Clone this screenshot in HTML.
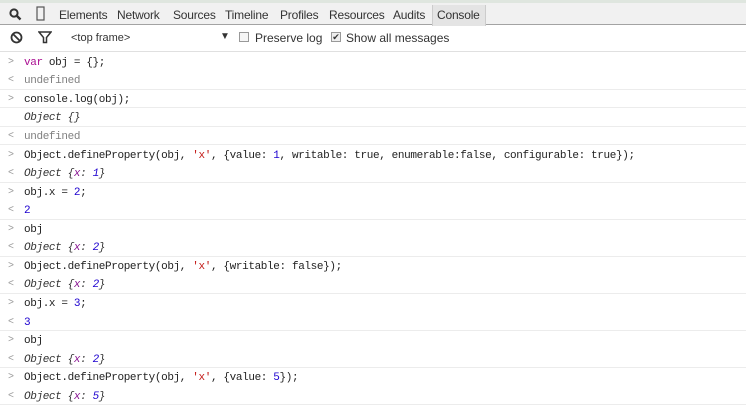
<!DOCTYPE html>
<html><head><meta charset="utf-8"><style>
body{margin:0;width:746px;height:407px;overflow:hidden;background:#fff;position:relative;font-family:"Liberation Sans",sans-serif}
.tb{position:absolute;left:0;top:0;width:746px;height:25px;background:#f1f1f1;border-top:3px solid #dfe6df;box-sizing:border-box;border-bottom:1px solid #a3a3a3}
.tab{position:absolute;top:5px;font-size:12px;color:#333;letter-spacing:-0.2px}
.sel{position:absolute;left:432px;top:2px;width:52px;height:21px;background:#e4e4e4;border-left:1px solid #ccc;border-right:1px solid #ccc}
.tb2{position:absolute;left:0;top:25px;width:746px;height:26px;border-bottom:1px solid #e0e0e0;font-size:12px;color:#333}
.r{position:absolute;left:0;width:746px;height:18.56px;font-family:"Liberation Mono",monospace;font-size:11px;letter-spacing:-0.37px;line-height:20px;color:#222;white-space:pre;box-sizing:border-box}
.r .t{position:absolute;left:24px;top:0}
.r .p{position:absolute;left:8px;top:0;color:#999;font-size:10px}
.b{border-bottom:1px solid #ececec}
.k{color:#aa0d91}.s{color:#c41a16}.n{color:#1c00cf}.u{color:#808080}.i{font-style:italic;color:#333}.pr{color:#881391}
</style></head><body>
<div class="tb">
<svg style="position:absolute;left:9px;top:5px" width="13" height="13" viewBox="0 0 13 13"><circle cx="5" cy="5" r="3.6" fill="none" stroke="#333" stroke-width="2"/><path d="M7.5 7.5L11.5 11.5" stroke="#333" stroke-width="2.4"/></svg>
<svg style="position:absolute;left:36px;top:3px" width="9" height="15" viewBox="0 0 9 15"><rect x="1" y="1" width="7" height="13" fill="none" stroke="#555" stroke-width="1.2"/></svg>
<span class="tab" style="left:59px">Elements</span>
<span class="tab" style="left:117px">Network</span>
<span class="tab" style="left:173px">Sources</span>
<span class="tab" style="left:225px">Timeline</span>
<span class="tab" style="left:280px">Profiles</span>
<span class="sel"></span>
<span class="tab" style="left:329px">Resources</span>
<span class="tab" style="left:393px">Audits</span>
<span class="tab" style="left:437px">Console</span>
</div>
<div class="tb2">
<svg style="position:absolute;left:10px;top:6px" width="13" height="13" viewBox="0 0 13 13"><circle cx="6.5" cy="6.5" r="5" fill="none" stroke="#333" stroke-width="1.8"/><path d="M3 3L10 10" stroke="#333" stroke-width="1.8"/></svg>
<svg style="position:absolute;left:38px;top:6px" width="14" height="13" viewBox="0 0 14 13"><path d="M1 1H13L8.5 6.5V11.5H5.5V6.5Z" fill="none" stroke="#333" stroke-width="1.5"/></svg>
<span style="position:absolute;left:71px;top:7px;font-size:11px">&lt;top frame&gt;</span>
<span style="position:absolute;left:220px;top:6px;font-size:10px">▼</span>
<span style="position:absolute;left:239px;top:7px;width:10px;height:10px;border:1px solid #999;background:#f6f6f6;box-sizing:border-box"></span>
<span style="position:absolute;left:255px;top:6px">Preserve log</span>
<span style="position:absolute;left:331px;top:7px;width:10px;height:10px;border:1px solid #999;background:#eee;box-sizing:border-box;font-size:9px;line-height:9px;text-align:center">✔</span>
<span style="position:absolute;left:346px;top:6px">Show all messages</span>
</div>
<div class="r" style="top:52.7px"><span class="p">&gt;</span><span class="t"><span class="k">var</span> obj = {};</span></div>
<div class="r b" style="top:71.3px"><span class="p">&lt;</span><span class="t u">undefined</span></div>
<div class="r b" style="top:89.8px"><span class="p">&gt;</span><span class="t">console.log(obj);</span></div>
<div class="r b" style="top:108.4px"><span class="t i">Object {}</span></div>
<div class="r b" style="top:126.9px"><span class="p">&lt;</span><span class="t u">undefined</span></div>
<div class="r" style="top:145.5px"><span class="p">&gt;</span><span class="t">Object.defineProperty(obj, <span class="s">'x'</span>, {value: <span class="n">1</span>, writable: true, enumerable:false, configurable: true});</span></div>
<div class="r b" style="top:164px"><span class="p">&lt;</span><span class="t i">Object {<span class="pr">x</span>: <span class="n">1</span>}</span></div>
<div class="r" style="top:182.6px"><span class="p">&gt;</span><span class="t">obj.x = <span class="n">2</span>;</span></div>
<div class="r b" style="top:201.2px"><span class="p">&lt;</span><span class="t n">2</span></div>
<div class="r" style="top:219.7px"><span class="p">&gt;</span><span class="t">obj</span></div>
<div class="r b" style="top:238.3px"><span class="p">&lt;</span><span class="t i">Object {<span class="pr">x</span>: <span class="n">2</span>}</span></div>
<div class="r" style="top:256.8px"><span class="p">&gt;</span><span class="t">Object.defineProperty(obj, <span class="s">'x'</span>, {writable: false});</span></div>
<div class="r b" style="top:275.4px"><span class="p">&lt;</span><span class="t i">Object {<span class="pr">x</span>: <span class="n">2</span>}</span></div>
<div class="r" style="top:293.9px"><span class="p">&gt;</span><span class="t">obj.x = <span class="n">3</span>;</span></div>
<div class="r b" style="top:312.5px"><span class="p">&lt;</span><span class="t n">3</span></div>
<div class="r" style="top:331px"><span class="p">&gt;</span><span class="t">obj</span></div>
<div class="r b" style="top:349.6px"><span class="p">&lt;</span><span class="t i">Object {<span class="pr">x</span>: <span class="n">2</span>}</span></div>
<div class="r" style="top:368.2px"><span class="p">&gt;</span><span class="t">Object.defineProperty(obj, <span class="s">'x'</span>, {value: <span class="n">5</span>});</span></div>
<div class="r b" style="top:386.7px"><span class="p">&lt;</span><span class="t i">Object {<span class="pr">x</span>: <span class="n">5</span>}</span></div>
</body></html>
